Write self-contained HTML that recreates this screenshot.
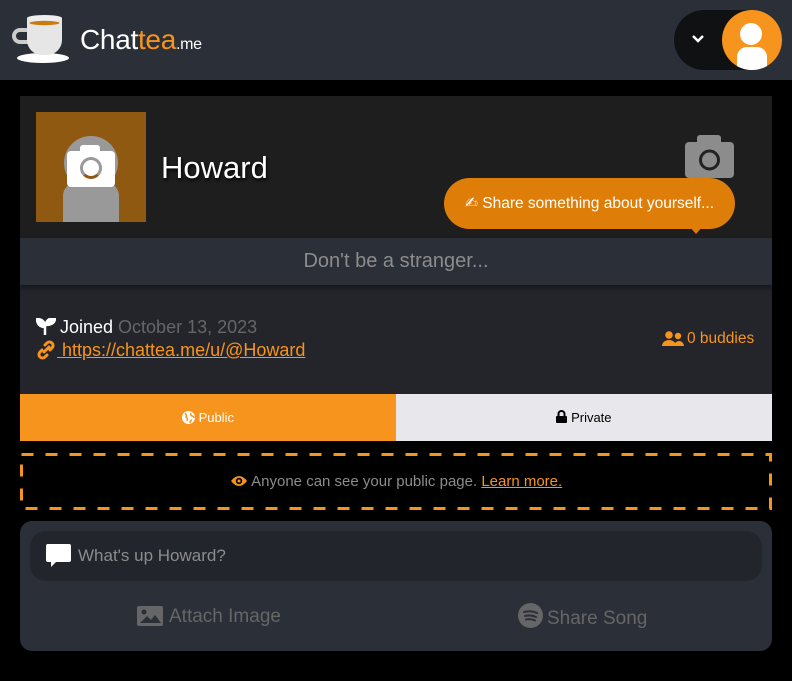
<!DOCTYPE html>
<html><head><meta charset="utf-8"><style>
*{margin:0;padding:0;box-sizing:border-box}
body{width:792px;height:681px;background:#000;font-family:"Liberation Sans","DejaVu Sans",sans-serif;position:relative;overflow:hidden}
.a{position:absolute}
</style></head><body>
<div class="a" style="left:0;top:0;width:792px;height:80px;background:#2b2f38"></div>
<svg class="a" style="left:0;top:0" width="80" height="80" viewBox="0 0 80 80">
<ellipse cx="43" cy="58" rx="26" ry="5" fill="#fff"/>
<path d="M28 30 h-8 a6 6 0 0 0 0 12 h9" fill="none" stroke="#ccc" stroke-width="4"/>
<path d="M27 18 h35 v22 a15 15 0 0 1 -15 15 h-5 a15 15 0 0 1 -15 -15z" fill="#e6e6e6"/>
<ellipse cx="44.5" cy="18" rx="17.5" ry="3" fill="#eee"/>
<ellipse cx="44.5" cy="23" rx="15" ry="2.2" fill="#c97a10"/>
</svg>
<div class="a" style="left:80px;top:24px;font-size:28px;color:#fff;letter-spacing:-0.3px">Chat<span style="color:#f7941d">tea</span><span style="font-size:16px">.me</span></div>
<div class="a" style="left:674px;top:10px;width:108px;height:60px;border-radius:30px;background:#101113"></div>
<svg class="a" style="left:690px;top:33px" width="16" height="12" viewBox="0 0 16 12"><path d="M3 3 l5 5 l5 -5" fill="none" stroke="#fff" stroke-width="2.5"/></svg>
<div class="a" style="left:722px;top:10px;width:60px;height:60px;border-radius:50%;background:#f7941d;overflow:hidden">
<div class="a" style="left:18px;top:13px;width:22px;height:22px;border-radius:50%;background:#fff"></div>
<div class="a" style="left:15px;top:37px;width:30px;height:30px;border-radius:10px 10px 0 0;background:#fff"></div></div>

<div class="a" style="left:20px;top:96px;width:752px;height:142px;background:#1e1e1e"></div>
<div class="a" style="left:36px;top:112px;width:110px;height:110px;background:#905912;overflow:hidden">
<div class="a" style="left:28px;top:24px;width:54px;height:54px;border-radius:50%;background:#999"></div>
<div class="a" style="left:27px;top:70px;width:56px;height:50px;border-radius:14px 14px 0 0;background:#999"></div>
<div class="a" style="left:31px;top:39px;width:48px;height:36px;border-radius:4px;background:#fff"></div>
<div class="a" style="left:44px;top:33px;width:20px;height:10px;border-radius:3px;background:#fff"></div>
<div class="a" style="left:44px;top:45px;width:22px;height:22px;border-radius:50%;border:3px solid #999;border-bottom-color:#905912"></div>
</div>
<div class="a" style="left:161px;top:150px;font-size:31px;color:#fff;text-shadow:1px 2px 3px #000">Howard</div>
<svg class="a" style="left:685px;top:135px" width="50" height="44" viewBox="0 0 50 44"><rect x="0" y="7" width="49" height="36" rx="4" fill="#8c8c8c"/><rect x="12" y="0" width="24" height="12" rx="3" fill="#8c8c8c"/><circle cx="24.5" cy="25" r="9" fill="none" stroke="#222" stroke-width="3"/></svg>
<div class="a" style="left:444px;top:178px;width:291px;height:51px;border-radius:26px;background:#de7d08;color:#fff;font-size:15.5px;line-height:51px;text-align:center">✍ Share something about yourself...</div>
<div class="a" style="left:689px;top:226px;width:0;height:0;border-left:7px solid transparent;border-right:7px solid transparent;border-top:8px solid #de7d08"></div>

<div class="a" style="left:20px;top:238px;width:752px;height:47px;background:#2b2f38;color:#8c8c8c;font-size:20px;line-height:47px;text-align:center;box-shadow:0 3px 5px rgba(0,0,0,.4);z-index:2">Don't be a stranger...</div>
<div class="a" style="left:20px;top:285px;width:752px;height:109px;background:#23252b"></div>
<svg class="a" style="left:36px;top:318px" width="20" height="17" viewBox="0 0 20 17"><path d="M9 17 v-8 M9 9 C9 3 5 1 1 1 C1 6 4 9 9 9 M10 7 C10 2 14 0 19 0 C19 5 15 7 10 7" fill="#fff" stroke="#fff" stroke-width="2.5"/></svg>
<div class="a" style="left:60px;top:317px;font-size:18px;color:#fff">Joined <span style="color:#666">October 13, 2023</span></div>
<svg class="a" style="left:36px;top:340px" width="20" height="20" viewBox="0 0 20 20"><path d="M8 12 l5-5 M9 5 l2-2 a3.5 3.5 0 0 1 5 5 l-2 2 M11 15 l-2 2 a3.5 3.5 0 0 1 -5 -5 l2 -2" fill="none" stroke="#f7941d" stroke-width="3" stroke-linecap="round"/></svg>
<div class="a" style="left:57px;top:340px;font-size:18px;color:#f7941d;text-decoration:underline">&nbsp;https://chattea.me/u/@Howard</div>
<svg class="a" style="left:662px;top:331px" width="22" height="16" viewBox="0 0 22 16"><circle cx="7" cy="4" r="3.8" fill="#f7941d"/><circle cx="16" cy="5" r="3.2" fill="#f7941d"/><path d="M0 15 a7 6 0 0 1 14 0z M12 15 a5 5 0 0 1 10 0z" fill="#f7941d"/></svg>
<div class="a" style="left:687px;top:330px;font-size:15.5px;color:#f7941d">0 buddies</div>

<div class="a" style="left:20px;top:394px;width:376px;height:47px;background:#f7941d;color:#fff;font-size:13px;line-height:47px;text-align:center"><svg width="13" height="13" viewBox="0 0 13 13" style="vertical-align:-2px"><circle cx="6.5" cy="6.5" r="6.5" fill="#fff"/><path d="M3 2 q2 2 1 4 q2 1 1 4 M9 2 q-1 2 1 3 q2 0 2 2 M8 12 q0-3 2-3" stroke="#f7941d" stroke-width="1.5" fill="none"/></svg> Public</div>
<div class="a" style="left:396px;top:394px;width:376px;height:47px;background:#e8e8ec;color:#000;font-size:13px;line-height:47px;text-align:center"><svg width="11" height="13" viewBox="0 0 11 13" style="vertical-align:-1px"><path d="M2.5 6 v-2 a3 3 0 0 1 6 0 v2" fill="none" stroke="#000" stroke-width="2"/><rect x="0" y="6" width="11" height="7" rx="1" fill="#000"/></svg> Private</div>

<svg class="a" style="left:20px;top:453px" width="752" height="57"><rect x="1.5" y="1.5" width="749" height="54" fill="none" stroke="#f7941d" stroke-width="3" stroke-dasharray="12 12"/></svg>
<div class="a" style="left:20px;top:453px;width:752px;height:57px;color:#8c8c8c;font-size:15px;line-height:57px;text-align:center"><svg width="18" height="12" viewBox="0 0 18 12" style="vertical-align:-1px"><path d="M1 6 Q9 -4 17 6 Q9 16 1 6z" fill="#f7941d"/><circle cx="9" cy="6" r="3.2" fill="#000"/><circle cx="9" cy="6" r="1.5" fill="#f7941d"/></svg> Anyone can see your public page. <span style="color:#f7941d;text-decoration:underline">Learn more.</span></div>

<div class="a" style="left:20px;top:521px;width:752px;height:130px;border-radius:12px;background:#2b2f38"></div>
<div class="a" style="left:30px;top:531px;width:732px;height:50px;border-radius:16px;background:#22252b"></div>
<svg class="a" style="left:46px;top:544px" width="25" height="24" viewBox="0 0 25 24"><path d="M2 0 h21 a2 2 0 0 1 2 2 v14 a2 2 0 0 1 -2 2 h-13 l-5 5 v-5 h-3 a2 2 0 0 1 -2 -2 v-14 a2 2 0 0 1 2 -2z" fill="#fff"/></svg>
<div class="a" style="left:78px;top:546px;font-size:17px;color:#8c8c8c">What's up Howard?</div>
<svg class="a" style="left:137px;top:606px" width="26" height="20" viewBox="0 0 26 20"><rect x="0" y="0" width="26" height="20" rx="2" fill="#666"/><circle cx="7" cy="6" r="2.5" fill="#2b2f38"/><path d="M3 17 l7-7 l4 4 l4-5 l6 8z" fill="#2b2f38"/></svg>
<div class="a" style="left:169px;top:606px;font-size:19px;color:#666">Attach Image</div>
<svg class="a" style="left:518px;top:603px" width="25" height="25" viewBox="0 0 25 25"><circle cx="12.5" cy="12.5" r="12.5" fill="#666"/><path d="M6 9 q7-2 13 1 M7 13 q6-1.5 11 1 M8 16.5 q5-1 9 1" stroke="#2b2f38" stroke-width="2" fill="none" stroke-linecap="round"/></svg>
<div class="a" style="left:547px;top:608px;font-size:19px;color:#666">Share Song</div>
</body></html>
